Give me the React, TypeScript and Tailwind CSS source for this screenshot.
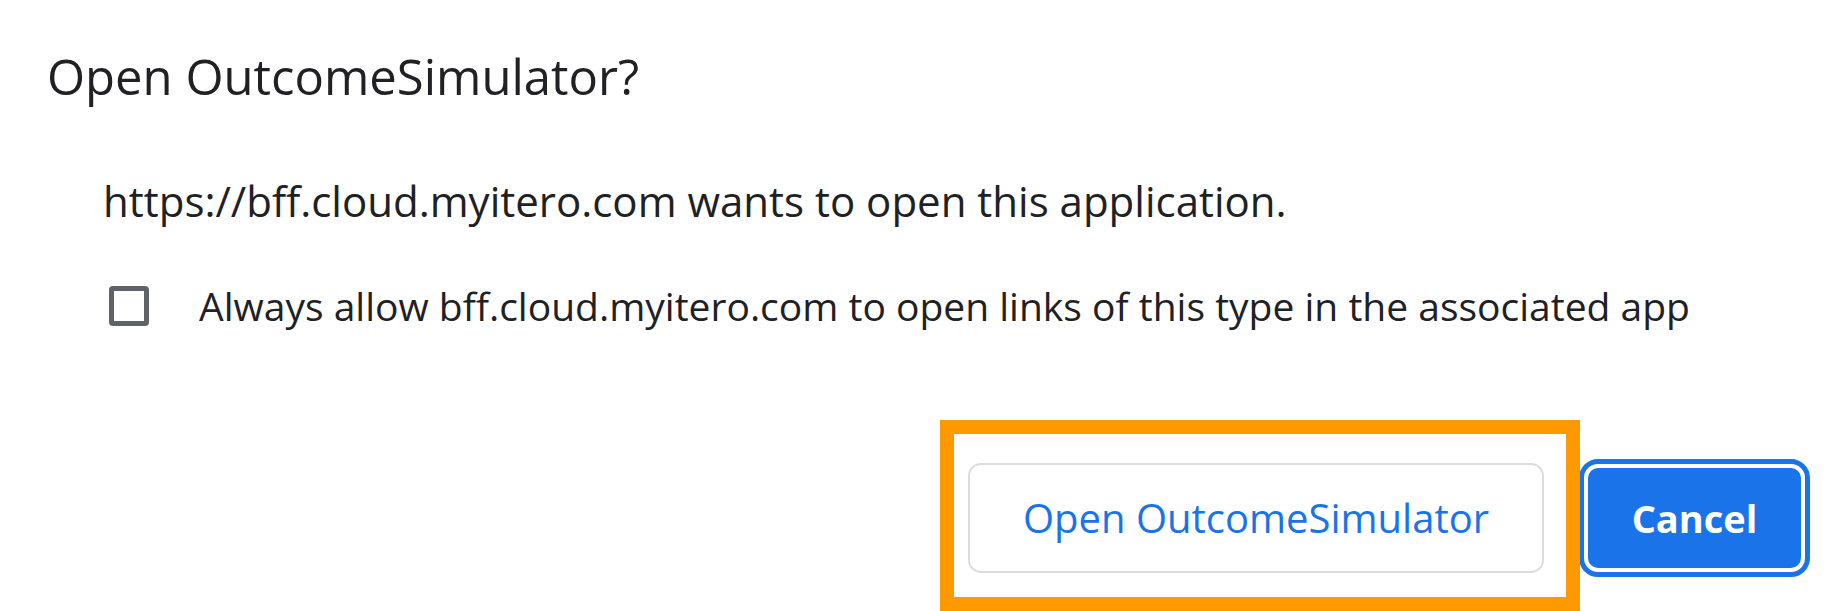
import React from "react";

const Checkbox: React.FC = () => (
  <div className="w-[40px] h-[40px] shrink-0 rounded-[4px] border-[5px] border-[#5f6368] bg-white" />
);

export default function App() {
  return (
    <div className="relative w-[1840px] h-[611px] overflow-hidden bg-white font-['Open_Sans',sans-serif] text-[#202124]">
      <div className="flex flex-col">
        <h1 className="ml-[47px] mt-[47px] text-[49px] leading-[58px] font-normal">
          Open OutcomeSimulator?
        </h1>
        <p className="ml-[103px] mt-[71px] text-[42px] leading-[50px]">
          https://bff.cloud.myitero.com wants to open this application.
        </p>
        <label className="ml-[109px] mt-[57px] flex items-center gap-[50px]">
          <Checkbox />
          <span className="text-[39px] leading-[46px]">
            Always allow bff.cloud.myitero.com to open links of this type in the associated app
          </span>
        </label>
        <div className="mt-[134px] flex items-center justify-end gap-[44px] pr-[39px]">
          <button className="w-[576px] h-[110px] rounded-[13px] border-2 border-[#dadce0] bg-white text-[40px] font-medium text-[#1a73e8]">
            Open OutcomeSimulator
          </button>
          <button className="w-[213px] h-[100px] rounded-[10px] bg-[#1a73e8] text-[38px] font-bold text-white outline-[5px] outline-solid outline-[#1a73e8] outline-offset-[4px]">
            Cancel
          </button>
        </div>
      </div>
      <div className="absolute left-[940px] top-[420px] w-[640px] h-[191px] border-[14px] border-[#ff9900]" />
    </div>
  );
}
